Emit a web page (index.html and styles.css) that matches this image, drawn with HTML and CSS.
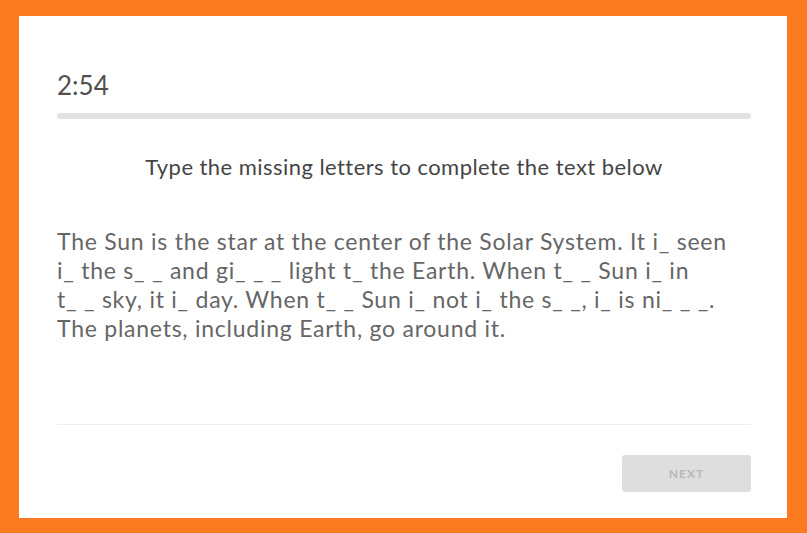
FILE: index.html
```html
<!DOCTYPE html>
<html lang="en">
<head>
    <meta charset="UTF-8">
    <meta name="viewport" content="width=device-width, initial-scale=1.0">
    <title>Missing Letters</title>
    <link rel="stylesheet" href="styles.css">
</head>
<body>
    <div class="card">
        <div class="timer">2:54</div>
        <div class="progress"><div class="progress-fill"></div></div>

        <h2 class="prompt">Type the missing letters to complete the text below</h2>

        <p class="passage">
            The Sun is the star at the center of the Solar System. It i_ seen<br>
            i_ the s_ _ and gi_ _ _ light t_ the Earth. When t_ _ Sun i_ in<br>
            t_ _ sky, it i_ day. When t_ _ Sun i_ not i_ the s_ _, i_ is ni_ _ _.<br>
            The planets, including Earth, go around it.
        </p>

        <div class="footer">
            <button class="next-button" disabled>NEXT</button>
        </div>
    </div>
</body>
</html>
```

FILE: styles.css
```css
/* Page frame */
html, body {
    margin: 0;
    padding: 0;
}

body {
    background-color: #fb7a1f;
    font-family: Lato, "Open Sans", sans-serif;
    padding: 16px 20px 15px 19px;
    height: 533px;
    box-sizing: border-box;
}

.card {
    background-color: #fff;
    height: 502px;
    box-sizing: border-box;
    padding: 54px 36px 0 38px;
    display: flex;
    flex-direction: column;
}

.timer {
    font-size: 26px;
    color: #505050;
    line-height: 30px;
}

.progress {
    height: 6px;
    background-color: #e2e2e2;
    border-radius: 3px;
    margin-top: 13px;
}

.progress-fill {
    width: 0%;
    height: 100%;
}

.prompt {
    font-size: 22px;
    font-weight: normal;
    letter-spacing: 0.45px;
    color: #454545;
    text-align: center;
    margin: 34px 0 0 0;
    line-height: 28px;
}

.passage {
    font-size: 23px;
    letter-spacing: 0.75px;
    color: #666;
    line-height: 29px;
    margin: 46px 0 0 0;
}

.footer {
    margin-top: auto;
    border-top: 1px solid #eee;
    padding: 30px 0 26px 0;
    display: flex;
    justify-content: flex-end;
}

.next-button {
    width: 129px;
    height: 37px;
    background-color: #dedede;
    border: none;
    border-radius: 3px;
    color: #b8b8b8;
    font-family: inherit;
    font-size: 12px;
    font-weight: bold;
    letter-spacing: 1px;
}
```
